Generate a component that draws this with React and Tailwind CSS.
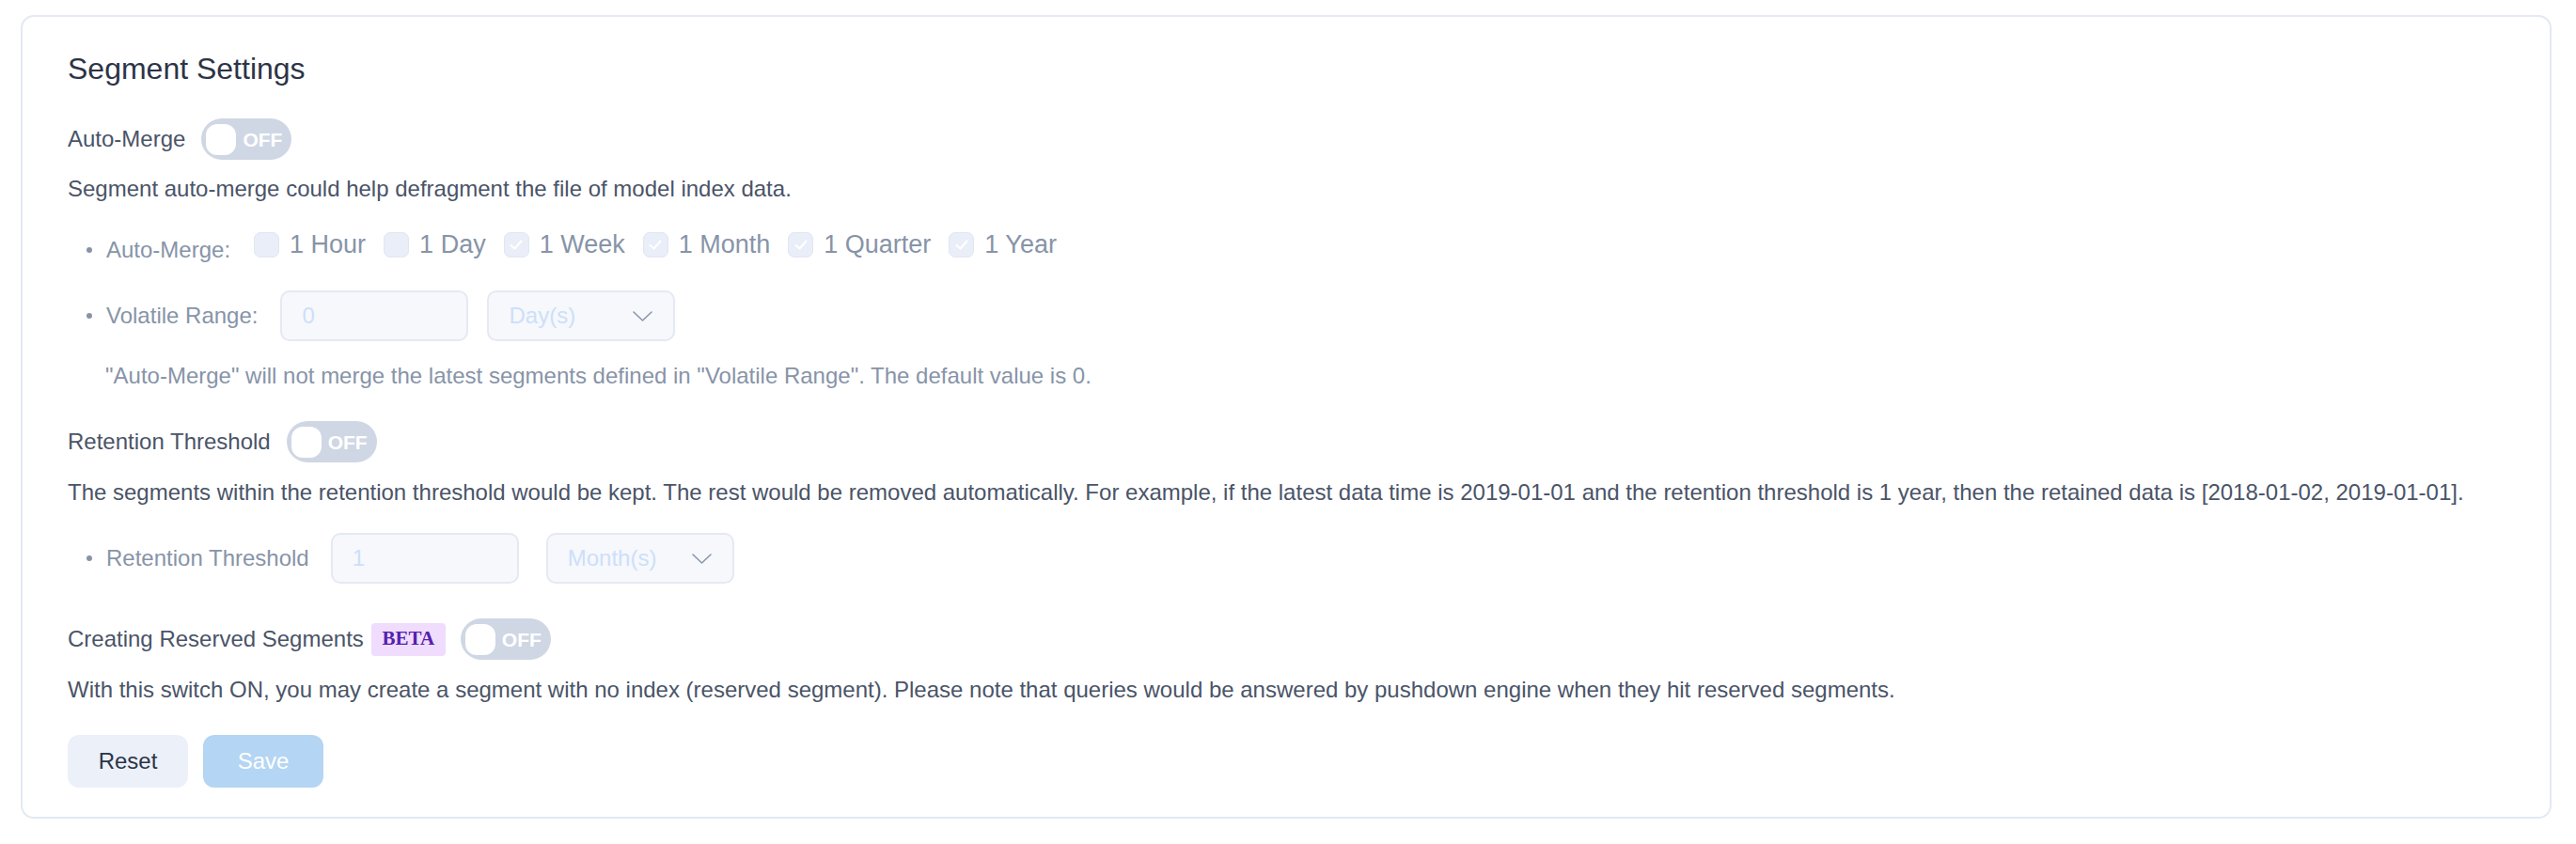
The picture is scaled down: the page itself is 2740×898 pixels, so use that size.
import React from 'react'

const font = { fontFamily: '"Liberation Sans", Arial, sans-serif' }

function Toggle({ className = '' }) {
  return (
    <div
      className={`flex h-[44px] w-[96px] shrink-0 items-center rounded-full bg-[#cfd7e4] pl-[5px] ${className}`}
    >
      <span className="h-[33px] w-[32px] rounded-[12px] bg-white" />
      <span className="ml-[7px] text-[21px] font-bold leading-none text-white">
        OFF
      </span>
    </div>
  )
}

function Checkbox({ checked, label }) {
  return (
    <label className="flex items-center">
      <span className="flex h-[27px] w-[27px] items-center justify-center rounded-[7px] border border-[#e1e7f2] bg-[#e9eef8]">
        {checked && (
          <svg width="14" height="11" viewBox="0 0 14 11" fill="none">
            <polyline
              points="1.5,6 5.5,9.5 12.5,1.5"
              stroke="#ffffff"
              strokeWidth="2.2"
              strokeLinecap="round"
              strokeLinejoin="round"
            />
          </svg>
        )}
      </span>
      <span className="ml-[11px] text-[27px] leading-[32px] text-[#8794a8]">
        {label}
      </span>
    </label>
  )
}

function Bullet({ children, className = '' }) {
  return (
    <div className={`flex items-center ${className}`}>
      <span className="ml-[20px] h-[6px] w-[6px] shrink-0 rounded-full bg-[#8794a8]" />
      <span className="ml-[15px] text-[24px] leading-[30px] text-[#8794a8]">
        {children}
      </span>
    </div>
  )
}

function InputBox({ value }) {
  return (
    <div className="flex h-[54px] w-[200px] items-center rounded-[10px] border-2 border-[#e4e9f4] bg-[#f6f8fb] pl-[21px] text-[24px] text-[#cddffa]">
      {value}
    </div>
  )
}

function SelectBox({ value, className = '' }) {
  return (
    <div
      className={`flex h-[54px] w-[200px] items-center justify-between rounded-[10px] border-2 border-[#e4e9f4] bg-[#f6f8fb] pl-[21px] pr-[22px] text-[24px] text-[#cddffa] ${className}`}
    >
      <span>{value}</span>
      <svg width="21" height="11" viewBox="0 0 21 11" fill="none">
        <polyline
          points="1,1 10.5,10 20,1"
          stroke="#8a96ab"
          strokeWidth="1.6"
          strokeLinecap="round"
          strokeLinejoin="round"
        />
      </svg>
    </div>
  )
}

const options = [
  { label: '1 Hour', checked: false },
  { label: '1 Day', checked: false },
  { label: '1 Week', checked: true },
  { label: '1 Month', checked: true },
  { label: '1 Quarter', checked: true },
  { label: '1 Year', checked: true },
]

export default function App() {
  return (
    <div className="min-h-screen bg-white pl-[22px] pt-[16px]" style={font}>
      <section className="h-[855px] w-[2692px] rounded-[14px] border-2 border-[#e4e9f3] bg-white pl-[48px] pt-[35px]">
        <h2 className="text-[32px] leading-[40px] text-[#2c3447]">
          Segment Settings
        </h2>

        <div className="mt-[33px] flex h-[44px] items-center">
          <span className="text-[24px] text-[#4a5468]">Auto-Merge</span>
          <Toggle className="ml-[17px]" />
        </div>
        <p className="mt-[15px] text-[24px] leading-[32px] text-[#4a5468]">
          Segment auto-merge could help defragment the file of model index data.
        </p>

        <div className="mt-[27px] flex h-[32px] items-center">
          <Bullet className="mt-[12px]">Auto-Merge:</Bullet>
          <div className="ml-[25px] flex items-center gap-[19px]">
            {options.map((o) => (
              <Checkbox key={o.label} label={o.label} checked={o.checked} />
            ))}
          </div>
        </div>

        <div className="mt-[33px] flex h-[54px] items-center">
          <Bullet>Volatile Range:</Bullet>
          <div className="ml-[24px] flex items-center">
            <InputBox value="0" />
            <SelectBox value="Day(s)" className="ml-[20px]" />
          </div>
        </div>

        <p className="ml-[40px] mt-[22px] text-[24px] leading-[30px] text-[#8794a8]">
          "Auto-Merge" will not merge the latest segments defined in "Volatile
          Range". The default value is 0.
        </p>

        <div className="mt-[33px] flex h-[44px] items-center">
          <span className="text-[24px] text-[#4a5468]">Retention Threshold</span>
          <Toggle className="ml-[17px]" />
        </div>
        <p className="mt-[16px] text-[24px] leading-[32px] text-[#4a5468]">
          The segments within the retention threshold would be kept. The rest
          would be removed automatically. For example, if the latest data time
          is 2019-01-01 and the retention threshold is 1 year, then the retained
          data is [2018-01-02, 2019-01-01].
        </p>

        <div className="mt-[27px] flex h-[54px] items-center">
          <Bullet>Retention Threshold</Bullet>
          <div className="ml-[23px] flex items-center">
            <InputBox value="1" />
            <SelectBox value="Month(s)" className="ml-[29px]" />
          </div>
        </div>

        <div className="mt-[37px] flex h-[44px] items-center">
          <span className="text-[24px] text-[#4a5468]">
            Creating Reserved Segments
          </span>
          <span
            className="ml-[8px] flex h-[35px] w-[79px] items-center justify-center rounded-[4px] bg-[#f0dcfd] text-[21px] font-bold text-[#5420ad]"
            style={{ fontFamily: '"Liberation Serif", "Times New Roman", serif' }}
          >
            BETA
          </span>
          <Toggle className="ml-[16px]" />
        </div>
        <p className="mt-[16px] text-[24px] leading-[32px] text-[#4a5468]">
          With this switch ON, you may create a segment with no index (reserved
          segment). Please note that queries would be answered by pushdown
          engine when they hit reserved segments.
        </p>

        <div className="mt-[32px] flex gap-[16px]">
          <button className="h-[56px] w-[128px] rounded-[12px] bg-[#ebf0f9] text-[24px] text-[#2c3447]">
            Reset
          </button>
          <button className="h-[56px] w-[128px] rounded-[12px] bg-[#b4d5f4] text-[24px] text-white">
            Save
          </button>
        </div>
      </section>
    </div>
  )
}
